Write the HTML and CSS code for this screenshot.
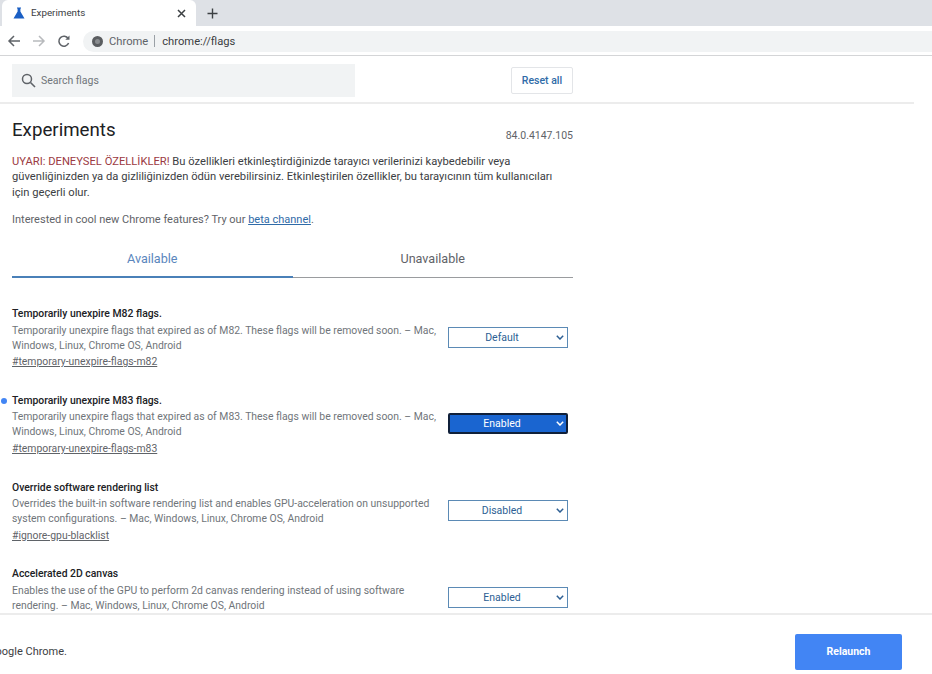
FILE: index.html
```html
<!DOCTYPE html>
<html lang="en">
<head>
<meta charset="UTF-8">
<meta name="viewport" content="width=device-width, initial-scale=1.0">
<title>Experiments</title>
<link rel="stylesheet" href="styles.css">
</head>
<body>

<div class="tabstrip">
  <div class="tab">
    <svg class="flask" width="12" height="12" viewBox="0 0 12 12"><path d="M4 0.5h4v1H7.4v3L11.5 11.5H0.5L4.6 4.5v-3H4z" fill="#1a5fc4"/></svg>
    <span class="tab-title">Experiments</span>
    <svg class="tab-close" width="9" height="9" viewBox="0 0 9 9"><path d="M1 1l7 7M8 1l-7 7" stroke="#3c4043" stroke-width="1.5"/></svg>
  </div>
  <svg class="new-tab" width="11" height="11" viewBox="0 0 11 11"><path d="M5.5 0.5v10M0.5 5.5h10" stroke="#3c4043" stroke-width="1.4"/></svg>
</div>

<div class="toolbar">
  <svg width="14" height="14" viewBox="0 0 14 14"><path d="M13 7H2M7 2L2 7l5 5" fill="none" stroke="#5f6368" stroke-width="1.5"/></svg>
  <svg width="14" height="14" viewBox="0 0 14 14"><path d="M1 7h11M7 2l5 5-5 5" fill="none" stroke="#b8babd" stroke-width="1.5"/></svg>
  <svg width="14" height="14" viewBox="0 0 14 14"><path d="M11.6 9a5 5 0 1 1-.4-4.4" fill="none" stroke="#5f6368" stroke-width="1.5"/><path d="M12.5 1.5v4.2H8.3z" fill="#5f6368"/></svg>
  <div class="omnibox">
    <span class="site-icon"></span>
    <span class="site-name">Chrome</span>
    <span class="omni-sep"></span>
    <span class="url">chrome://flags</span>
  </div>
</div>

<div class="search-row">
  <div class="search-box">
    <svg width="15" height="15" viewBox="0 0 15 15"><circle cx="6" cy="6" r="4.5" fill="none" stroke="#5f6368" stroke-width="1.5"/><path d="M9.5 9.5l4.5 4.5" stroke="#5f6368" stroke-width="1.6"/></svg>
    <span>Search flags</span>
  </div>
  <button class="reset">Reset all</button>
</div>

<div class="content">
  <div class="title-row">
    <h1>Experiments</h1>
    <span class="version">84.0.4147.105</span>
  </div>
  <p class="warning"><span class="warn-red">UYARI: DENEYSEL ÖZELLİKLER!</span> Bu özellikleri etkinleştirdiğinizde tarayıcı verilerinizi kaybedebilir veya güvenliğinizden ya da gizliliğinizden ödün verebilirsiniz. Etkinleştirilen özellikler, bu tarayıcının tüm kullanıcıları için geçerli olur.</p>
  <p class="beta">Interested in cool new Chrome features? Try our <a href="#">beta channel</a>.</p>

  <div class="tabs">
    <div class="tab-head active">Available</div>
    <div class="tab-head">Unavailable</div>
  </div>

  <div class="flags">
    <div class="flag">
      <div class="flag-text">
        <h2>Temporarily unexpire M82 flags.</h2>
        <p>Temporarily unexpire flags that expired as of M82. These flags will be removed soon. – Mac, Windows, Linux, Chrome OS, Android</p>
        <a href="#">#temporary-unexpire-flags-m82</a>
      </div>
      <div class="select">Default<svg width="8" height="5" viewBox="0 0 8 5"><path d="M0.8 0.8L4 4l3.2-3.2" fill="none" stroke="#2d5f94" stroke-width="1.5"/></svg></div>
    </div>
    <div class="flag changed">
      <div class="flag-text">
        <h2>Temporarily unexpire M83 flags.</h2>
        <p>Temporarily unexpire flags that expired as of M83. These flags will be removed soon. – Mac, Windows, Linux, Chrome OS, Android</p>
        <a href="#">#temporary-unexpire-flags-m83</a>
      </div>
      <div class="select enabled">Enabled<svg width="8" height="5" viewBox="0 0 8 5"><path d="M0.8 0.8L4 4l3.2-3.2" fill="none" stroke="#fff" stroke-width="1.5"/></svg></div>
    </div>
    <div class="flag">
      <div class="flag-text">
        <h2>Override software rendering list</h2>
        <p>Overrides the built-in software rendering list and enables GPU-acceleration on unsupported system configurations. – Mac, Windows, Linux, Chrome OS, Android</p>
        <a href="#">#ignore-gpu-blacklist</a>
      </div>
      <div class="select">Disabled<svg width="8" height="5" viewBox="0 0 8 5"><path d="M0.8 0.8L4 4l3.2-3.2" fill="none" stroke="#2d5f94" stroke-width="1.5"/></svg></div>
    </div>
    <div class="flag">
      <div class="flag-text">
        <h2>Accelerated 2D canvas</h2>
        <p>Enables the use of the GPU to perform 2d canvas rendering instead of using software rendering. – Mac, Windows, Linux, Chrome OS, Android</p>
      </div>
      <div class="select">Enabled<svg width="8" height="5" viewBox="0 0 8 5"><path d="M0.8 0.8L4 4l3.2-3.2" fill="none" stroke="#2d5f94" stroke-width="1.5"/></svg></div>
    </div>
  </div>
</div>

<div class="footer">
  <div class="notice"><span>Your changes will take effect the next time you relaunch Google Chrome.</span></div>
  <button class="relaunch">Relaunch</button>
</div>

</body>
</html>
```

FILE: styles.css
```css
html, body {
  height: 100%;
}
body {
  margin: 0;
  display: flex;
  flex-direction: column;
  overflow: hidden;
  font-family: Roboto, "Liberation Sans", sans-serif;
  color: #202124;
  background-color: #fff;
}
h1, h2, p {
  margin: 0;
  font-weight: normal;
}
button {
  font-family: inherit;
}
.tabstrip {
  height: 26px;
  flex: none;
  display: flex;
  align-items: center;
  background-color: #dee1e6;
}
.tab {
  width: 194px;
  height: 26px;
  box-sizing: border-box;
  margin-left: 2px;
  padding: 0 10px 0 11px;
  display: flex;
  align-items: center;
  background-color: #fff;
  border-radius: 6px 6px 0 0;
}
.tab-title {
  flex: 1;
  margin-left: 6px;
  padding-bottom: 1px;
  font-size: 9.8px;
  color: #3c4043;
}
.new-tab {
  margin-left: 11px;
}
.toolbar {
  height: 30px;
  flex: none;
  box-sizing: border-box;
  padding: 1px 0 0 7px;
  display: flex;
  align-items: center;
  gap: 11px;
  border-bottom: 1px solid #d4d5d7;
}
.omnibox {
  flex: 1;
  height: 21px;
  margin-left: 1px;
  padding-left: 9px;
  display: flex;
  align-items: center;
  background-color: #f1f3f4;
  border-radius: 11px 0 0 11px;
  font-size: 11.2px;
}
.site-icon {
  width: 11px;
  height: 11px;
  box-sizing: border-box;
  border: 3px solid #5a5d60;
  border-radius: 50%;
  background-color: #8a8d90;
}
.site-name {
  margin-left: 6px;
  color: #5f6368;
}
.omni-sep {
  width: 1px;
  height: 12px;
  margin: 0 7px 0 6px;
  background-color: #9aa0a6;
}
.url {
  color: #3c4043;
}
.search-row {
  width: 914px;
  height: 48px;
  flex: none;
  box-sizing: border-box;
  padding: 8px 341px 0 12px;
  display: flex;
  justify-content: space-between;
  align-items: flex-start;
  border-bottom: 2px solid #ececec;
}
.search-box {
  width: 343px;
  height: 33px;
  box-sizing: border-box;
  padding-left: 9px;
  display: flex;
  align-items: center;
  gap: 5px;
  background-color: #f1f3f4;
  font-size: 10.5px;
  color: #70757a;
}
.reset {
  width: 62px;
  height: 27px;
  margin-top: 3px;
  padding: 0;
  background-color: #fff;
  border: 1px solid #e3e5e8;
  border-radius: 2px;
  font-size: 10.5px;
  font-weight: 500;
  color: #2f6ba8;
}
.content {
  flex: 1;
  min-height: 0;
  overflow: hidden;
  width: 561px;
  padding-left: 12px;
}
.title-row {
  height: 38px;
  display: flex;
  justify-content: space-between;
  align-items: flex-end;
}
h1 {
  font-size: 18.7px;
  line-height: 24px;
  color: #202124;
}
.version {
  font-size: 10.5px;
  color: #5f6368;
}
.warning {
  width: 545px;
  margin-top: 12px;
  font-size: 11.2px;
  line-height: 15.3px;
  color: #3c4043;
}
.warn-red {
  color: #9c3a42;
}
.beta {
  margin-top: 12.3px;
  font-size: 11px;
  line-height: 15px;
  color: #5f6368;
}
.beta a {
  color: #2f6ba8;
}
.tabs {
  margin-top: 12px;
  display: flex;
}
.tab-head {
  flex: 1;
  height: 39px;
  box-sizing: border-box;
  padding-top: 12px;
  text-align: center;
  font-size: 12.6px;
  color: #5f6368;
  border-bottom: 1px solid #9a9c9f;
}
.tab-head.active {
  color: #5a86bd;
  border-bottom: 2px solid #4a80b8;
}
.flags {
  margin-top: 28px;
}
.flag {
  position: relative;
  height: 86.7px;
  display: flex;
  justify-content: space-between;
  align-items: flex-start;
}
.flag.changed::before {
  content: "";
  position: absolute;
  left: -11px;
  top: 5px;
  width: 6px;
  height: 6px;
  border-radius: 50%;
  background-color: #4285f4;
}
.flag-text {
  width: 430px;
  font-size: 10.4px;
  line-height: 15px;
  color: #70757a;
}
.flag-text h2 {
  margin-bottom: 1.5px;
  font-size: 10.4px;
  line-height: 15px;
  font-weight: 500;
  color: #202124;
}
.flag-text a {
  display: inline-block;
  margin-top: 1.5px;
  color: #5f6368;
}
.select {
  position: relative;
  width: 120px;
  height: 21px;
  margin: 20.6px 5px 0 0;
  padding-right: 12px;
  box-sizing: border-box;
  display: flex;
  justify-content: center;
  align-items: center;
  background-color: #fff;
  border: 1px solid #5b8ab5;
  font-size: 10.5px;
  color: #2d5f94;
}
.select svg {
  position: absolute;
  right: 3px;
  top: 7px;
}
.select.enabled {
  background-color: #1a65d0;
  border: 2px solid #10203a;
  border-radius: 2px;
  color: #fff;
}
.select.enabled svg {
  right: 2px;
  top: 6px;
}
.footer {
  height: 61px;
  flex: none;
  box-sizing: border-box;
  padding: 19px 30px 0 0;
  display: flex;
  justify-content: space-between;
  align-items: flex-start;
  background-color: #fff;
  border-top: 2px solid #ececec;
}
.notice {
  width: 67px;
  margin-top: 11px;
  display: flex;
  justify-content: flex-end;
  overflow: hidden;
  white-space: nowrap;
  font-size: 11px;
  color: #3c4043;
}
.relaunch {
  width: 107px;
  height: 36px;
  padding: 0 0 2px;
  background-color: #4285f4;
  border: none;
  border-radius: 2px;
  font-size: 10.5px;
  font-weight: 700;
  color: #fff;
}
```
